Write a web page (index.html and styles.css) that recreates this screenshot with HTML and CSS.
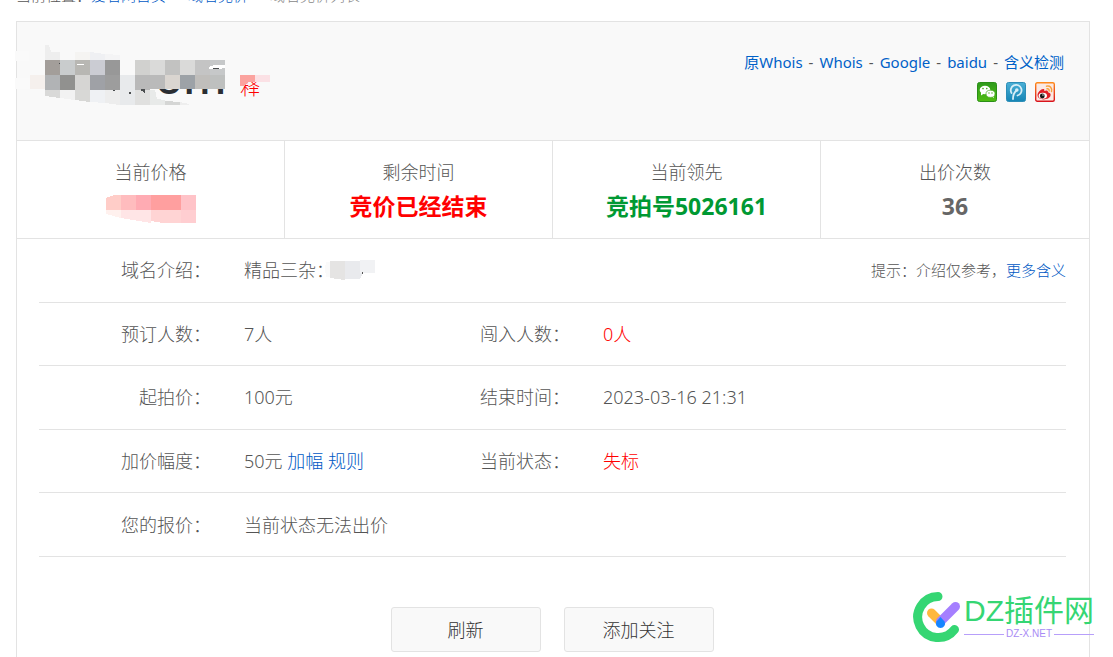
FILE: index.html
```html
<!DOCTYPE html>
<html lang="zh-CN">
<head>
<meta charset="utf-8">
<title>域名竞价</title>
<link rel="stylesheet" href="styles.css">
</head>
<body class="page">
<nav class="crumbs">
  <span>当前位置：</span><a class="link crumb" href="#">爱名网首页</a><a class="link crumb" href="#">域名竞价</a><span class="current">域名竞价列表</span>
</nav>
<main class="card">
  <header class="head">
    <svg class="domain" width="260" height="70" viewBox="17 45 260 70" shape-rendering="crispEdges">
      <text class="domain-name" x="155" y="94">om</text>
      <text class="domain-note" x="240" y="95">释</text>
      <path fill="#fafafa" d="M15 51h14v10H15zM15 78h15v11H15z"/>
      <path fill="#f5f0ed" d="M30 75h15v14H30z"/>
      <path fill="#eeeeee" d="M45 45h4l2 7h9v8H45z"/>
      <path fill="#f5f4f2" d="M75 52h15v8H75z"/>
      <path fill="#eff0f3" d="M90 52l15 2v6H90z"/>
      <path fill="#f4f4f5" d="M105 54l15 1v5h-15z"/>
      <path fill="#a39e9a" d="M45 60h15v15H45z"/>
      <path fill="#c9cccd" d="M60 60h15v15H60z"/>
      <path fill="#b8b7b3" d="M75 60h15v15H75z"/>
      <path fill="#cbccd3" d="M90 60h15v15H90z"/>
      <path fill="#989898" d="M105 60h15v15h-15z"/>
      <path fill="#b1b3b5" d="M45 75h15v15H45z"/>
      <path fill="#91918f" d="M60 75h15v15H60z"/>
      <path fill="#d6d5d3" d="M75 75h15v15H75z"/>
      <path fill="#9fa1a6" d="M90 75h15v15H90z"/>
      <path fill="#9d9d9d" d="M105 75h15v15h-15z"/>
      <path fill="#e8eaec" d="M120 75h15v30h-15z"/>
      <path fill="#d9d9d8" d="M45 90h15v8l-15-2z"/>
      <path fill="#f2f2f2" d="M60 90h15v10l-15-2z"/>
      <path fill="#d8d8d6" d="M75 90h15v12l-15-2z"/>
      <path fill="#eff1f4" d="M90 90h15v13l-15-1z"/>
      <path fill="#ededed" d="M105 90h15v15l-15-2z"/>
      <path fill="#e0e0df" d="M135 90h15v15h-15z"/>
      <path fill="#e8eae9" d="M150 90h5l2 9 8 1v5h-15z"/>
      <path fill="#d5d6d5" d="M165 101l15 1v3h-15z"/>
      <path fill="#eeeeee" d="M180 102l9 2v1h-9z"/>
      <path fill="#d1d1cf" d="M135 60h15v15h-15z"/>
      <path fill="#dadad9" d="M150 60h15v15h-15zM180 60h15v15h-15z"/>
      <path fill="#c2c2c1" d="M165 60h15v15h-15z"/>
      <path fill="#c4c4c4" d="M195 60h15v15h-15z"/>
      <path fill="#c6c8c9" d="M210 60h15v15h-15z"/>
      <path fill="#b9b9b9" d="M135 75h15v15h-15z"/>
      <path fill="#bababa" d="M150 75h15v14h-15z"/>
      <path fill="#dad5d0" d="M165 75h15v14h-15z"/>
      <path fill="#9da2a7" d="M180 75h15v14h-15z"/>
      <path fill="#c0bebb" d="M195 75h15v14h-15z"/>
      <path fill="#bec0bf" d="M210 75h15v14h-15z"/>
      <path fill="#ffffff" d="M77 64h7v1h-7zM209 67l5-2h11v3l-6 1h-10z"/>
      <path fill="#4b4e50" d="M213 68h6v1h-6zM59 63h1v1h-1zM113 90h2v1h-2zM129 92h2v2h-2zM141 89h4v4h-1l-1-2h-2z"/>
      <path fill="#fba39f" d="M240 75h15v7h-7l-3 4h-5z"/>
      <path fill="#fbe1e5" d="M255 75h15v7h-15z"/>
    </svg>
    <div class="tools">
      <div class="lookup"><a class="link" href="#">原Whois</a><span>-</span><a class="link" href="#">Whois</a><span>-</span><a class="link" href="#">Google</a><span>-</span><a class="link" href="#">baidu</a><span>-</span><a class="link" href="#">含义检测</a></div>
      <div class="share">
        <a class="share-link" href="#" aria-label="微信"><svg width="20" height="20" viewBox="0 0 20 20">
          <defs><linearGradient id="g1" x2="0" y2="1"><stop stop-color="#2e9a1c"/><stop offset="1" stop-color="#4fbd12"/></linearGradient></defs>
          <rect x=".5" y=".5" width="19" height="19" rx="2" fill="url(#g1)" stroke="#2b8f18"/>
          <ellipse cx="8" cy="8" rx="5.3" ry="4.2" fill="#fff"/><path fill="#fff" d="M4 10l0 3.500 3-2zM15 14l2 2.200 0-3z"/>
          <ellipse cx="13.500" cy="11.800" rx="4.500" ry="3.600" fill="#fff" stroke="#43a91a" stroke-width=".7"/>
          <g fill="#43a91a"><circle cx="6" cy="6.600" r=".8"/><circle cx="9.800" cy="6.600" r=".8"/><circle cx="12" cy="11" r=".7"/><circle cx="15" cy="11" r=".7"/></g></svg></a>
        <a class="share-link" href="#" aria-label="腾讯微博"><svg width="20" height="20" viewBox="0 0 20 20">
          <defs><linearGradient id="g2" x2="0" y2="1"><stop stop-color="#4aafd6"/><stop offset="1" stop-color="#1585b5"/></linearGradient></defs>
          <rect x=".5" y=".5" width="19" height="19" rx="2" fill="url(#g2)" stroke="#2c8db7"/>
          <path d="M5.500 11a5.400 5.400 0 1 1 6 2.500M7 17c0-4 1-6.500 3.500-8.500" fill="none" stroke="#d7eef7" stroke-width="1.800" stroke-linecap="round"/><circle cx="10.800" cy="8" r="1.800" fill="#d7eef7"/></svg></a>
        <a class="share-link" href="#" aria-label="新浪微博"><svg width="20" height="20" viewBox="0 0 20 20">
          <defs><linearGradient id="g3" x2="0" y2="1"><stop stop-color="#ff8a1c"/><stop offset="1" stop-color="#d9141c"/></linearGradient></defs>
          <rect x=".7" y=".7" width="18.600" height="18.600" rx="1.500" fill="#fbe9e4" stroke="url(#g3)" stroke-width="1.400"/>
          <path fill="#e01f26" d="M2.500 13c0-3 4-6.500 6-6 1 .3 1 1 .7 2 2-.8 4-.7 3.800 1.200 2 .6 3 1.500 2.500 3.300-1 5-13 5.500-13-.5z"/>
          <ellipse cx="7.800" cy="13.700" rx="4.200" ry="3" fill="#fff"/><circle cx="7.300" cy="14" r="2.400" fill="#161616"/><circle cx="8" cy="13" r=".7" fill="#fff"/>
          <path d="M11.500 4.200c3.500-1 6 2 5 5.300M12 6.800c1.500-.3 2.500.8 2.100 2.200" fill="none" stroke="#f8a13a" stroke-width="1.400" stroke-linecap="round"/></svg></a>
      </div>
    </div>
  </header>
  <section class="stats">
    <div class="stat"><span>当前价格</span>
      <svg class="price" width="90" height="28" viewBox="105 195 90 28" shape-rendering="crispEdges">
        <path fill="#ffcdc8" d="M105 198l8-3h7v15h-15z"/><path fill="#ffbcbe" d="M120 195h15v15h-15z"/><path fill="#ffabb3" d="M135 195h15v15h-15z"/><path fill="#ff9f9f" d="M150 195h30v15h-30z"/><path fill="#ffc3c8" d="M180 195h15v15h-15z"/>
        <path fill="#fff1ee" d="M105 210h15v8l-15-4z"/><path fill="#ffe5e6" d="M120 210h30v13l-30-5z"/><path fill="#ffd4d4" d="M150 210h30v13h-18l-12-2z"/><path fill="#ffced1" d="M180 210h15v13h-15z"/>
      </svg></div>
    <div class="stat"><span>剩余时间</span><strong class="value red">竞价已经结束</strong></div>
    <div class="stat"><span>当前领先</span><strong class="value green">竞拍号5026161</strong></div>
    <div class="stat"><span>出价次数</span><strong class="value">36</strong></div>
  </section>
  <section class="rows">
    <div class="row intro"><span class="label">域名介绍：</span>
      <div class="data"><span class="kind">精品三杂：</span><svg class="patch" width="54" height="20" viewBox="322 262 54 20" shape-rendering="crispEdges">
        <path fill="#fafafa" d="M326 264h4v15h-4l-1-8z"/><path fill="#e5e4e3" d="M330 263h15v19l-15-2z"/><path fill="#e9eaed" d="M345 263h15v18h-15z"/><path fill="#f1f2f4" d="M360 262h15v13h-15z"/><path fill="#e9eaed" d="M360 275h3l-3 6z"/><path fill="#555" d="M362 274h1v2h-1z"/></svg></div>
      <span class="hint">提示：介绍仅参考，<a class="link" href="#">更多含义</a></span></div>
    <div class="row"><span class="label">预订人数：</span><span class="data">7人</span><span class="label">闯入人数：</span><span class="data red">0人</span></div>
    <div class="row"><span class="label">起拍价：</span><span class="data">100元</span><span class="label">结束时间：</span><span class="data">2023-03-16 21:31</span></div>
    <div class="row"><span class="label">加价幅度：</span><span class="data">50元 <a class="link" href="#">加幅</a> <a class="link" href="#">规则</a></span><span class="label">当前状态：</span><span class="data red">失标</span></div>
    <div class="row"><span class="label">您的报价：</span><span class="data">当前状态无法出价</span></div>
  </section>
  <div class="actions">
    <button class="btn" type="button">刷新</button>
    <button class="btn" type="button">添加关注</button>
  </div>
</main>
<div class="mark">
  <svg width="50" height="52" viewBox="913 591 50 52" fill="none" stroke-linecap="round">
    <path d="M938 596.500a20.500 20.500 0 1 0 16.500 33" stroke="#35d673" stroke-width="9"/>
    <path d="M931.500 613l9 9" stroke="#ffb83e" stroke-width="9"/>
    <path d="M940.500 621.500l15-15" stroke="#a57fff" stroke-width="9"/>
    <path d="M940.500 617l4 4.500a4.500 4.500 0 1 1-8 0z" fill="#1785ff"/>
  </svg>
  <div class="mark-text"><span class="mark-name">DZ插件网</span><span class="mark-site">DZ-X.NET</span></div>
</div>
</body>
</html>
```
FILE: styles.css
```css
* { box-sizing: border-box; }
.page {
  margin: 0;
  min-height: 100vh;
  display: flex;
  flex-direction: column;
  padding: 0 23px 0 16px;
  position: relative;
  background: #fff;
  color: #555;
  font: 300 18px/24px "Noto Sans", "Noto Sans CJK SC", sans-serif;
}
.link { color: #0058c4; text-decoration: none; }
.red { color: #f00; }
.green { color: #093; }
.crumbs {
  display: flex;
  align-items: flex-end;
  height: 5px;
  margin-bottom: 16px;
  overflow: hidden;
  font-size: 15px;
  line-height: 20px;
}
.crumb { margin-right: 22px; }
.current { color: #888; }
.card {
  flex: 1;
  border: 1px solid #e3e3e3;
  border-bottom: 0;
  padding-bottom: 5px;
}
.head {
  display: flex;
  justify-content: space-between;
  height: 119px;
  padding: 23px 25px 0 0;
  background: #f9f9f9;
  border-bottom: 1px solid #e3e3e3;
}
.domain { overflow: visible; }
.domain-name { font-size: 46px; font-weight: 500; fill: #2b2e33; }
.domain-note { font-size: 20px; fill: #f00; }
.tools { padding-top: 5px; font-size: 15px; font-weight: 400; }
.lookup { display: flex; gap: 6px; }
.tools .link { color: #0061c8; }
.share {
  display: flex;
  justify-content: flex-end;
  gap: 9px;
  padding: 8px 9px 0 0;
}
.share-link { display: flex; }
.stats {
  display: grid;
  grid-template-columns: repeat(4, 1fr);
  border-bottom: 1px solid #e3e3e3;
}
.stat {
  display: flex;
  flex-direction: column;
  align-items: center;
  height: 97px;
  padding-top: 19px;
  border-right: 1px solid #e3e3e3;
}
.stat:last-child { border-right: 0; }
.value { font-size: 23px; line-height: 32px; padding-top: 6px; font-weight: 700; }
.value:not(.red):not(.green) { color: #666; }
.price { margin-top: 11px; }
.rows {
  display: grid;
  grid-auto-rows: 1fr;
  min-height: 318px;
  margin: 0 23px 0 22px;
}
.row {
  display: grid;
  grid-template-columns: 172px 269px 90px 1fr;
  align-items: center;
  border-bottom: 1px solid #e3e3e3;
}
.intro { grid-template-columns: 172px 1fr auto; }
.label { text-align: right; }
.data { padding-left: 33px; }
.intro .data { display: flex; align-items: center; }
.kind { width: 78px; white-space: nowrap; }
.hint { font-size: 15px; }
.actions {
  display: flex;
  justify-content: center;
  gap: 23px;
  padding: 50px 2px 0 0;
}
.btn {
  width: 150px;
  height: 45px;
  padding: 0;
  border: 1px solid #e3e3e3;
  border-radius: 3px;
  background: #f9f9f9;
  color: #333;
  font: inherit;
}
.mark {
  position: absolute;
  right: 19px;
  bottom: 14px;
  display: flex;
  gap: 1px;
}
.mark-text { display: flex; flex-direction: column; }
.mark-name {
  padding-top: 2px;
  font: 400 30px/36px "Liberation Sans", "Noto Sans CJK SC", sans-serif;
  color: #35d673;
}
.mark-site {
  display: flex;
  align-items: center;
  gap: 2px;
  font: 10px/10px "Liberation Sans", sans-serif;
  color: #a98bf5;
}
.mark-site::before,
.mark-site::after { content: ""; flex: 1; height: 1px; background: #b79ffa; }
```
